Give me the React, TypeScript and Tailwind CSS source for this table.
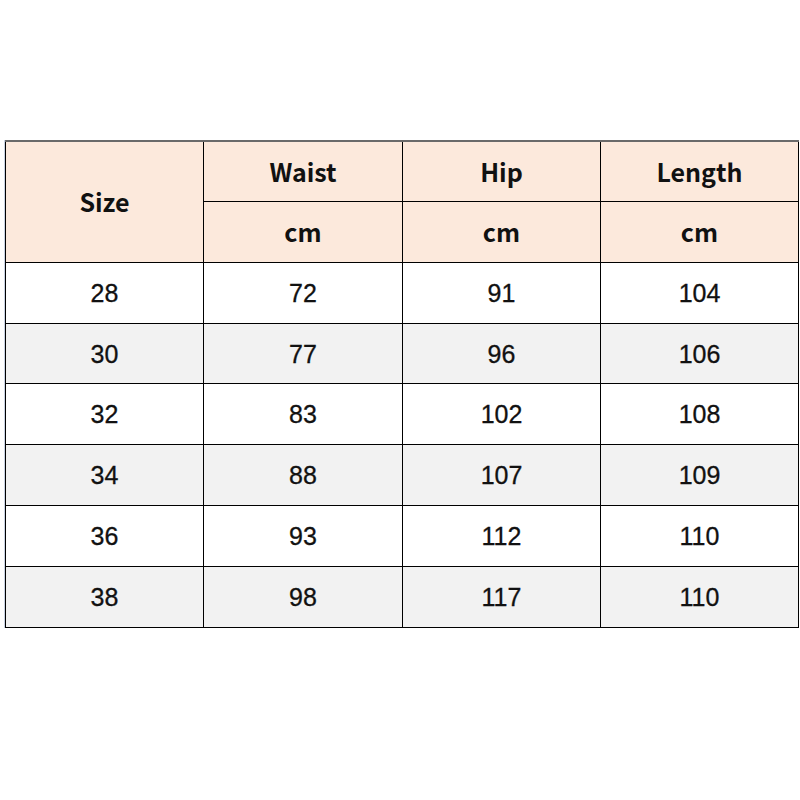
import React from "react";

const rows = [
  ["28", "72", "91", "104"],
  ["30", "77", "96", "106"],
  ["32", "83", "102", "108"],
  ["34", "88", "107", "109"],
  ["36", "93", "112", "110"],
  ["38", "98", "117", "110"],
];
const heights = ["h-[61px]", "h-[60px]", "h-[61px]", "h-[61px]", "h-[61px]", "h-[61px]"];

const head = "font-['Noto_Sans_CJK_SC','Noto_Sans',sans-serif] font-bold text-[25px] text-[#111]";
const num = "font-['Liberation_Sans',Arial,sans-serif] text-[25px] text-[#111] pt-[3px] [-webkit-text-stroke:0.3px_#111]";

export default function App() {
  return (
    <div className="w-[800px] h-[800px] bg-white pt-[140px] pl-[4px]">
      <div className="border-l border-[#c9d3e3] w-[794px]">
        <table className="border-collapse table-fixed w-[793px]">
          <colgroup>
            <col className="w-[198px]" />
            <col className="w-[199px]" />
            <col className="w-[198px]" />
            <col className="w-[198px]" />
          </colgroup>
          <thead>
            <tr className="h-[60px] bg-[#fce9dc]">
              <td rowSpan={2} className={`border border-black border-t-2 border-t-[#6a6a6a] text-center ${head}`}>Size</td>
              <td className={`border border-black border-t-2 border-t-[#6a6a6a] text-center ${head}`}>Waist</td>
              <td className={`border border-black border-t-2 border-t-[#6a6a6a] text-center ${head}`}>Hip</td>
              <td className={`border border-black border-t-2 border-t-[#6a6a6a] text-center ${head}`}>Length</td>
            </tr>
            <tr className="h-[61px] bg-[#fce9dc]">
              <td className={`border border-black text-center ${head}`}>cm</td>
              <td className={`border border-black text-center ${head}`}>cm</td>
              <td className={`border border-black text-center ${head}`}>cm</td>
            </tr>
          </thead>
          <tbody>
            {rows.map((r, i) => (
              <tr key={i} className={`${heights[i]} ${i % 2 === 1 ? "bg-[#f2f2f2]" : "bg-white"}`}>
                {r.map((c, j) => (
                  <td key={j} className={`border border-black text-center ${num}`}>{c}</td>
                ))}
              </tr>
            ))}
          </tbody>
        </table>
      </div>
    </div>
  );
}
